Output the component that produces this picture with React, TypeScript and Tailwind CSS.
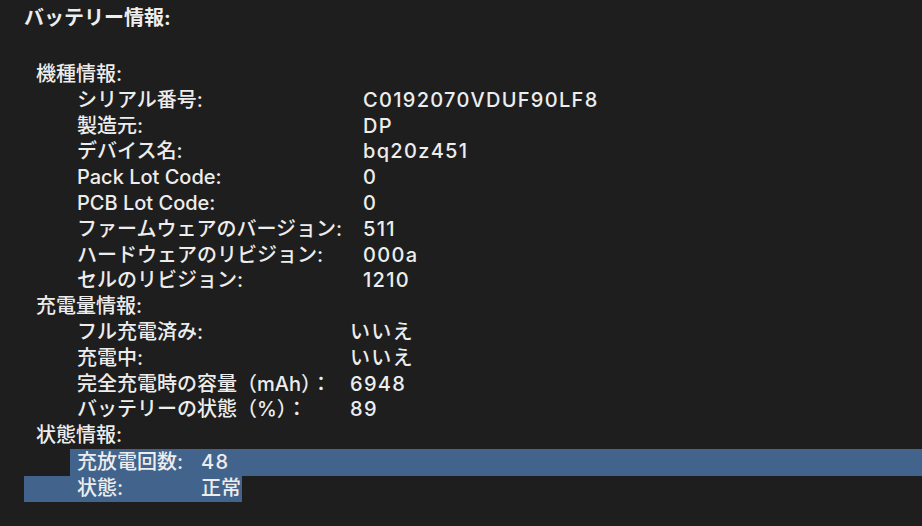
export default function App() {
  const font = { fontFamily: 'Inter, "Noto Sans CJK JP", sans-serif' };

  const model: [string, string][] = [
    ["シリアル番号:", "C0192070VDUF90LF8"],
    ["製造元:", "DP"],
    ["デバイス名:", "bq20z451"],
    ["Pack Lot Code:", "0"],
    ["PCB Lot Code:", "0"],
    ["ファームウェアのバージョン:", "511"],
    ["ハードウェアのリビジョン:", "000a"],
    ["セルのリビジョン:", "1210"],
  ];

  const charge: [string, string][] = [
    ["フル充電済み:", "いいえ"],
    ["充電中:", "いいえ"],
    ["完全充電時の容量（mAh）：", "6948"],
    ["バッテリーの状態（%）：", "89"],
  ];

  return (
    <div
      className="w-[922px] h-[526px] overflow-hidden bg-[#1e1e1e] text-[#ededed] text-[20px] font-medium leading-[25.8px]"
      style={font}
    >
      <div className="pl-[24px] pt-[6px] h-[62px] font-bold text-[20px]">バッテリー情報:</div>

      <div className="pl-[36px]">機種情報:</div>
      {model.map(([k, v]) => (
        <div key={k} className="flex pl-[77px]">
          <div className="w-[286px] shrink-0 whitespace-nowrap">{k}</div>
          <div className="tracking-[1.3px]">{v}</div>
        </div>
      ))}

      <div className="pl-[36px]">充電量情報:</div>
      {charge.map(([k, v]) => (
        <div key={k} className="flex pl-[77px]">
          <div className="w-[273px] shrink-0 whitespace-nowrap">{k}</div>
          <div className="tracking-[1.3px]">{v}</div>
        </div>
      ))}

      <div className="pl-[36px]">状態情報:</div>
      <div className="flex pl-[70px]">
        <div className="flex flex-1 bg-[#42648c] pl-[7px] h-[27px] items-center">
          <div className="w-[124px] shrink-0">充放電回数:</div>
          <div className="tracking-[1.3px]">48</div>
        </div>
      </div>
      <div className="flex pl-[24px]">
        <div className="flex w-[218px] bg-[#42648c] pl-[53px] h-[26px] items-center">
          <div className="w-[124px] shrink-0">状態:</div>
          <div>正常</div>
        </div>
      </div>
    </div>
  );
}
